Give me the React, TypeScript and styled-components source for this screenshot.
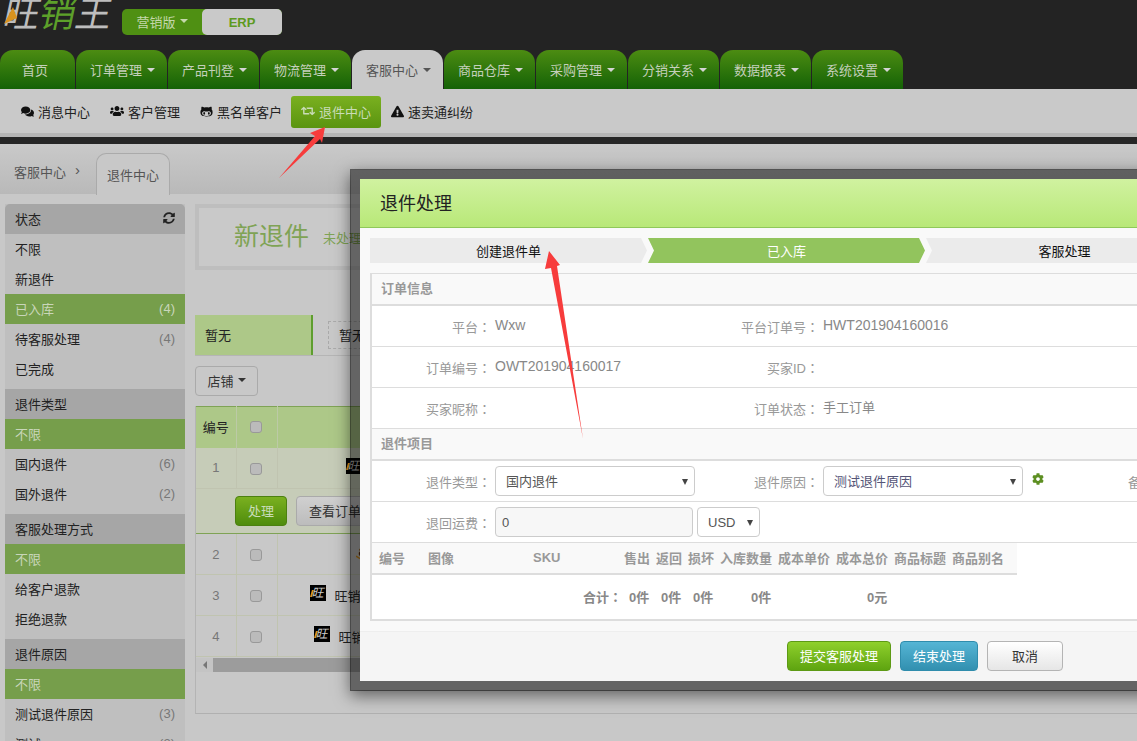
import * as React from 'react'
import styled, { createGlobalStyle } from 'styled-components'
import { FaComments, FaUsers, FaGithubAlt, FaRetweet, FaExclamationTriangle, FaSyncAlt, FaCog } from 'react-icons/fa'

const GlobalStyle = createGlobalStyle`
  html, body { margin: 0; padding: 0; overflow: hidden; background: #c8c8c8; }
  * { box-sizing: border-box; }
  body { font-family: "Liberation Sans", "Noto Sans CJK SC", sans-serif; font-size: 13px; color: #222; }
`

const Page = styled.div`
  position: relative;
  width: 1137px;
  height: 741px;
  overflow: hidden;
  background: #c8c8c8;
`

const TopBar = styled.div`
  height: 50px;
  background: #232323;
  display: flex;
  align-items: center;
  overflow: hidden;
`

const LogoWrap = styled.div`
  position: relative;
  width: 122px;
  height: 50px;
  flex: none;
`

const LogoText = styled.div`
  display: flex;
  margin: -10px 0 0 4px;
  font-size: 36px;
  line-height: 50px;
  transform: skewX(-12deg);
  color: #bdbdbd;
`

const LogoGreen = styled.span`
  color: #5da02a;
`

const LogoMark = styled.svg`
  position: absolute;
  left: 4px;
  top: 6px;
`

const VersionSwitch = styled.div`
  display: flex;
  height: 26px;
  width: 160px;
  margin-top: -6px;
  border-radius: 5px;
  background: #4f9013;
`

const VersionLabel = styled.div`
  width: 80px;
  display: flex;
  align-items: center;
  justify-content: center;
  gap: 4px;
  padding-bottom: 2px;
  color: #c5d8ac;
`

const VersionActive = styled.div`
  width: 80px;
  display: flex;
  align-items: center;
  justify-content: center;
  background: #c9c9c9;
  border-radius: 5px;
  color: #5d9a20;
  font-weight: bold;
`

const Caret = styled.i<{ $color?: string }>`
  display: inline-block;
  width: 0;
  height: 0;
  border-left: 4px solid transparent;
  border-right: 4px solid transparent;
  border-top: 4px solid ${p => p.$color || '#d5d5d5'};
`

const MainTabs = styled.div`
  display: flex;
  gap: 1px;
  height: 39px;
  background: #232323;
`

const MainTab = styled.div<{ $active?: boolean; $plain?: boolean }>`
  width: ${p => (p.$plain ? '75px' : '91px')};
  display: flex;
  align-items: center;
  justify-content: ${p => (p.$plain ? 'center' : 'flex-start')};
  gap: 5px;
  padding: ${p => (p.$plain ? '0 5px 0 0' : '0 0 0 14px')};
  border-radius: 13px 13px 0 0;
  background: ${p => (p.$active ? '#c9c9c9' : 'linear-gradient(#4c8c12, #146206)')};
  color: ${p => (p.$active ? '#555' : '#c5d0bc')};
`

const SubNav = styled.div`
  height: 48px;
  background: #c9c9c9;
  border-bottom: 4px solid #b5b5b5;
  display: flex;
  align-items: flex-start;
  padding: 7px 0 0 11px;
`

const SubItem = styled.div<{ $active?: boolean; $width: number }>`
  width: ${p => p.$width}px;
  height: 32px;
  display: flex;
  align-items: center;
  gap: 4px;
  padding: 0 0 2px 10px;
  white-space: nowrap;
  border-radius: 3px;
  color: ${p => (p.$active ? '#c9dcb8' : '#222')};
  background: ${p => (p.$active ? 'linear-gradient(#7ab020, #5a9410)' : 'transparent')};
  svg { flex: none; color: ${p => (p.$active ? '#c9dcb8' : '#111')}; }
`

const DarkStrip = styled.div`
  height: 7px;
  background: #262626;
`

const Crumbs = styled.div`
  height: 50px;
  display: flex;
  align-items: flex-end;
  padding-left: 14px;
  background: linear-gradient(#c9c9c9, #b9b9b9);
  color: #555;
`

const CrumbText = styled.div`
  height: 42px;
  display: flex;
  align-items: flex-start;
  padding-top: 10px;
  gap: 9px;
  width: 82px;
`

const CrumbSep = styled.span`
  font-size: 15px;
  line-height: 16px;
`

const CrumbTab = styled.div`
  width: 74px;
  height: 42px;
  margin-bottom: -1px;
  display: flex;
  align-items: center;
  justify-content: center;
  background: #c8c8c8;
  border: 1px solid #aaa;
  border-bottom: 0;
  border-radius: 10px 10px 0 0;
`

const Main = styled.div`
  display: flex;
  gap: 10px;
  padding: 10px 0 0 5px;
`

const Sidebar = styled.div`
  width: 180px;
  flex: none;
  background: #bfbfbf;
  display: flex;
  flex-direction: column;
`

const SideGroup = styled.div`
  margin-bottom: 5px;
  &:first-child > div:first-child { border-radius: 5px 5px 0 0; }
`

const SideHead = styled.div`
  height: 30px;
  display: flex;
  align-items: center;
  justify-content: space-between;
  padding: 0 10px 2px;
  background: #a6a6a6;
  color: #222;
`

const SideRow = styled.div<{ $active?: boolean }>`
  height: 30px;
  display: flex;
  align-items: center;
  justify-content: space-between;
  padding: 0 10px 2px;
  background: ${p => (p.$active ? '#769e4b' : 'transparent')};
  color: ${p => (p.$active ? '#c9d6ba' : '#222')};
`

const SideCount = styled.span<{ $active?: boolean }>`
  color: ${p => (p.$active ? '#c9d6ba' : '#777')};
`

const Content = styled.div`
  flex: 1;
  min-width: 0;
`

const Hero = styled.div`
  height: 66px;
  border: 4px solid #bebebe;
  background: #c9c9c9;
  display: flex;
  align-items: center;
  gap: 14px;
  padding-left: 35px;
  color: #7fa355;
`

const HeroTitle = styled.div`
  font-size: 25px;
  padding-bottom: 7px;
`

const FilterBar = styled.div`
  margin-top: 45px;
  height: 41px;
  display: flex;
  border-bottom: 1px solid #b5b5b5;
`

const FilterLabel = styled.div`
  width: 118px;
  display: flex;
  align-items: center;
  padding: 0 0 2px 10px;
  background: #adc888;
  border-right: 2px solid #5e9e2e;
`

const FilterChip = styled.div`
  margin: 6px 0 0 15px;
  height: 28px;
  width: 80px;
  display: flex;
  align-items: center;
  padding: 0 0 2px 10px;
  border: 1px dashed #aaa;
`

const DropButton = styled.div`
  margin-top: 10px;
  width: 63px;
  height: 30px;
  display: flex;
  align-items: center;
  justify-content: center;
  gap: 4px;
  padding-bottom: 2px;
  border: 1px solid #aaa;
  border-radius: 4px;
  color: #333;
`

const TableBox = styled.div`
  margin-top: 10px;
  border-left: 1px solid #b4b4b4;
  border-bottom: 1px solid #b0b0b0;
`

const OrderTable = styled.table`
  width: 100%;
  border-collapse: collapse;
  table-layout: fixed;
`

const HeadCell = styled.th`
  height: 41px;
  padding: 0 0 2px;
  font-weight: normal;
  color: #222;
  background: #adc888;
  border-top: 1px solid #7fa355;
  border-right: 1px solid #bccaa6;
`

const Cell = styled.td<{ $selected?: boolean }>`
  height: 41px;
  padding: 0;
  text-align: center;
  color: #777;
  background: ${p => (p.$selected ? '#c6ccb8' : 'transparent')};
  border-right: 1px solid #c0c4b0;
  border-bottom: 1px solid #c0c4b0;
`

const ActionCell = styled.td`
  height: 45px;
  padding: 0 0 0 39px;
  background: #c6ccb8;
  border-bottom: 1px solid #7fa355;
`

const Check = styled.input`
  appearance: none;
  display: block;
  width: 12px;
  height: 12px;
  margin: 2px 0 0 13px;
  background: #bbb;
  border: 1px solid #999;
  border-radius: 3px;
`

const ShopCell = styled.div<{ $offset: number }>`
  display: flex;
  align-items: center;
  gap: 9px;
  padding-left: ${p => p.$offset}px;
  color: #222;
  white-space: nowrap;
`

const MiniLogo = styled.div`
  position: relative;
  width: 16px;
  height: 16px;
  margin-bottom: 4px;
  flex: none;
  display: flex;
  align-items: center;
  justify-content: center;
  background: #000;
  color: #ccc;
  font-size: 12px;
  line-height: 16px;
  font-style: italic;
  &::before {
    content: '';
    position: absolute;
    left: 1px;
    top: 5px;
    width: 2px;
    height: 7px;
    background: #d9921e;
    transform: skewX(-15deg);
  }
`

const AmazonMark = styled.div`
  position: relative;
  width: 14px;
  height: 16px;
  margin-bottom: 4px;
  font-size: 14px;
  font-weight: bold;
  line-height: 14px;
  color: #222;
  svg { position: absolute; left: 0; top: 11px; }
`

const Btn = styled.button<{ $kind?: 'green' | 'blue' | 'plain'; $width: number }>`
  width: ${p => p.$width}px;
  height: 30px;
  padding: 0 0 2px;
  font: inherit;
  border-radius: 4px;
  border: 1px solid ${p => (p.$kind === 'green' ? '#5d9a15' : p.$kind === 'blue' ? '#2f8cac' : '#b4b4b4')};
  color: ${p => (p.$kind === 'plain' || !p.$kind ? '#333' : '#fff')};
  background: ${p =>
    p.$kind === 'green'
      ? 'linear-gradient(#8fd02c, #5ea410)'
      : p.$kind === 'blue'
        ? 'linear-gradient(#55b5d5, #3290b0)'
        : 'linear-gradient(#fff, #e6e6e6)'};
`

const DimButton = styled.button<{ $kind?: 'green'; $width: number }>`
  width: ${p => p.$width}px;
  height: 30px;
  margin-right: 9px;
  padding: 0 0 2px;
  font: inherit;
  border-radius: 4px;
  border: 1px solid ${p => (p.$kind ? '#4c8010' : '#aaa')};
  color: ${p => (p.$kind ? '#c9dcb8' : '#333')};
  background: ${p => (p.$kind ? 'linear-gradient(#7ab020, #4f8c0c)' : 'linear-gradient(#d0d0d0, #bcbcbc)')};
`

const ScrollBar = styled.div`
  height: 14px;
  margin-top: 1px;
  display: flex;
  background: #c4c4c4;
`

const ScrollArrow = styled.div`
  width: 17px;
  display: flex;
  align-items: center;
  justify-content: center;
  &::before {
    content: '';
    border-top: 4px solid transparent;
    border-bottom: 4px solid transparent;
    border-right: 4px solid #777;
  }
`

const ScrollThumb = styled.div`
  flex: 1;
  background: #9c9c9c;
`

const TableFoot = styled.div`
  height: 41px;
`

const Modal = styled.div`
  position: absolute;
  left: 350px;
  top: 169px;
  width: 1100px;
  border: 10px solid rgba(0, 0, 0, 0.5);
  background: #f9f9f9;
  background-clip: padding-box;
  box-shadow: 0 5px 15px rgba(0, 0, 0, 0.5);
`

const ModalHead = styled.div`
  height: 49px;
  display: flex;
  align-items: center;
  padding: 0 0 2px 20px;
  font-size: 18px;
  color: #222;
  background: linear-gradient(#d0f2a0, #b8e878);
  border-bottom: 1px solid #8fc85a;
`

const ModalBody = styled.div`
  padding: 10px;
`

const Steps = styled.div`
  display: flex;
  height: 25px;
`

const Step = styled.div<{ $active?: boolean; $first?: boolean }>`
  width: 277px;
  margin-left: ${p => (p.$first ? '0' : '1px')};
  display: flex;
  align-items: center;
  justify-content: center;
  padding-bottom: 1px;
  background: ${p => (p.$active ? '#92c45d' : '#ebebeb')};
  color: ${p => (p.$active ? '#fff' : '#111')};
  clip-path: ${p =>
    p.$first
      ? 'polygon(0 0, calc(100% - 6px) 0, 100% 50%, calc(100% - 6px) 100%, 0 100%)'
      : 'polygon(0 0, calc(100% - 6px) 0, 100% 50%, calc(100% - 6px) 100%, 0 100%, 6px 50%)'};
`

const Panel = styled.div`
  margin-top: 10px;
  border: 2px solid #ddd;
  border-width: 1px 0 2px 2px;
  background: #fff;
`

const SectionHead = styled.div`
  height: 32px;
  display: flex;
  align-items: center;
  padding: 0 0 3px 9px;
  font-weight: bold;
  color: #999;
  background: #f9f9f9;
  border-bottom: 2px solid #ddd;
`

const FormRow = styled.div`
  height: 41px;
  display: flex;
  align-items: center;
  border-bottom: 1px solid #ddd;
`

const FieldLabel = styled.div<{ $width: number }>`
  width: ${p => p.$width}px;
  flex: none;
  text-align: right;
  white-space: nowrap;
  margin-right: 4px;
  color: #999;
`

// the traditional-Chinese face centres the full-width colon, as the page does
const Colon = styled.span`
  font-family: "Noto Sans CJK TC", sans-serif;
`

const Value = styled.div<{ $width: number; $latin?: boolean }>`
  width: ${p => p.$width}px;
  flex: none;
  color: #888;
  padding-bottom: 3px;
  font-size: ${p => (p.$latin ? '14px' : '13px')};
`

const SelectBox = styled.div<{ $width: number }>`
  position: relative;
  width: ${p => p.$width}px;
  flex: none;
  &::after {
    content: '';
    position: absolute;
    right: 7px;
    top: 13px;
    border-left: 3.5px solid transparent;
    border-right: 3.5px solid transparent;
    border-top: 6px solid #444;
  }
`

const Select = styled.select<{ $accent?: boolean; $pad: number }>`
  appearance: none;
  display: block;
  width: 100%;
  height: 30px;
  padding: 0 0 0 ${p => p.$pad}px;
  font: inherit;
  color: ${p => (p.$accent ? '#557' : '#555')};
  background: #fff;
  border: 1px solid #ccc;
  border-radius: 4px;
`

const Field = styled.input`
  width: 198px;
  height: 30px;
  padding: 0 6px;
  margin-right: 4px;
  font: inherit;
  color: #555;
  background: #f7f7f7;
  border: 1px solid #ccc;
  border-radius: 4px;
  flex: none;
`

const GearSlot = styled.div`
  width: 90px;
  flex: none;
  padding: 0 0 4px 9px;
  color: #5d8f22;
  display: flex;
`

const itemGrid = '49px 105px 91px 32px 32px 32px 58px 58px 58px 58px 72px'

const ItemHead = styled.div`
  width: 645px;
  height: 32px;
  display: grid;
  grid-template-columns: ${itemGrid};
  align-items: center;
  padding-bottom: 2px;
  font-weight: bold;
  color: #999;
  background: #f9f9f9;
  border-bottom: 2px solid #ddd;
`

const ItemCell = styled.div<{ $pad?: number }>`
  padding-left: ${p => p.$pad ?? 7}px;
  white-space: nowrap;
`

const TotalRow = styled.div`
  width: 645px;
  height: 44px;
  display: grid;
  grid-template-columns: ${itemGrid};
  align-items: center;
  padding-bottom: 2px;
  font-weight: bold;
  color: #888;
`

const TotalLabel = styled.div`
  grid-column: 1 / 4;
  text-align: right;
  margin-right: -5px;
`

const ModalFoot = styled.div`
  height: 50px;
  display: flex;
  align-items: center;
  gap: 9px;
  padding-left: 427px;
  background: #f5f5f5;
  box-shadow: inset 0 1px 1px #eee;
`

const ArrowLayer = styled.svg`
  position: absolute;
  left: 0;
  top: 0;
  pointer-events: none;
`

const tabs = ['订单管理', '产品刊登', '物流管理', '客服中心', '商品仓库', '采购管理', '分销关系', '数据报表', '系统设置']

const sideGroups = [
  { title: '状态', refresh: true, rows: [['不限'], ['新退件'], ['已入库', '(4)', true], ['待客服处理', '(4)'], ['已完成']] },
  { title: '退件类型', rows: [['不限', '', true], ['国内退件', '(6)'], ['国外退件', '(2)']] },
  { title: '客服处理方式', rows: [['不限', '', true], ['给客户退款'], ['拒绝退款']] },
  { title: '退件原因', rows: [['不限', '', true], ['测试退件原因', '(3)'], ['测试', '(2)']] },
] as { title: string; refresh?: boolean; rows: [string, string?, boolean?][] }[]

const Logo = () =>
  <LogoWrap>
    <LogoText>旺<LogoGreen>销</LogoGreen>王</LogoText>
    <LogoMark width="14" height="20" viewBox="0 0 14 20">
      <polygon points="9,1 0,18 13,12" fill="#d9921e" />
    </LogoMark>
  </LogoWrap>

const Label = ({ width, text }: { width: number, text: string }) =>
  <FieldLabel $width={width}>{text}<Colon>：</Colon></FieldLabel>

const ShopRow = ({ num, children }: React.PropsWithChildren<{ num: number }>) =>
  <tr>
    <Cell $selected={num === 1}>{num}</Cell>
    <Cell $selected={num === 1}><Check type="checkbox" /></Cell>
    <Cell $selected={num === 1}>{children}</Cell>
  </tr>

const InfoRow = ({ a, b, c, d, latin }: { a: string, b: string, c: string, d: string, latin?: boolean }) =>
  <FormRow>
    <Label width={119} text={a} />
    <Value $width={214} $latin>{b}</Value>
    <Label width={110} text={c} />
    <Value $width={300} $latin={latin}>{d}</Value>
  </FormRow>

export default function App() {
  return <Page>
    <GlobalStyle />
    <TopBar>
      <Logo />
      <VersionSwitch>
        <VersionLabel>营销版 <Caret $color="#c5d8ac" /></VersionLabel>
        <VersionActive>ERP</VersionActive>
      </VersionSwitch>
    </TopBar>
    <MainTabs>
      <MainTab $plain>首页</MainTab>
      {tabs.map(t =>
        <MainTab key={t} $active={t === '客服中心'}>
          {t}<Caret $color={t === '客服中心' ? '#555' : '#d5d5d5'} />
        </MainTab>)}
    </MainTabs>
    <SubNav>
      <SubItem $width={89}><FaComments size={13} />消息中心</SubItem>
      <SubItem $width={90}><FaUsers size={14} />客户管理</SubItem>
      <SubItem $width={101}><FaGithubAlt size={13} />黑名单客户</SubItem>
      <SubItem $width={90} $active><FaRetweet size={14} />退件中心</SubItem>
      <SubItem $width={100}><FaExclamationTriangle size={13} />速卖通纠纷</SubItem>
    </SubNav>
    <DarkStrip />
    <Crumbs>
      <CrumbText>客服中心<CrumbSep>›</CrumbSep></CrumbText>
      <CrumbTab>退件中心</CrumbTab>
    </Crumbs>
    <Main>
      <Sidebar>
        {sideGroups.map(g =>
          <SideGroup key={g.title}>
            <SideHead>{g.title}{g.refresh && <FaSyncAlt size={12} color="#222" />}</SideHead>
            {g.rows.map(([label, count, active]) =>
              <SideRow key={label} $active={active}>
                {label}
                {count && <SideCount $active={active}>{count}</SideCount>}
              </SideRow>)}
          </SideGroup>)}
      </Sidebar>
      <Content>
        <Hero>
          <HeroTitle>新退件</HeroTitle>
          <span>未处理</span>
        </Hero>
        <FilterBar>
          <FilterLabel>暂无</FilterLabel>
          <FilterChip>暂无</FilterChip>
        </FilterBar>
        <DropButton>店铺 <Caret $color="#333" /></DropButton>
        <TableBox>
          <OrderTable>
            <colgroup>
              <col width={40} />
              <col width={41} />
              <col />
            </colgroup>
            <thead>
              <tr>
                <HeadCell>编号</HeadCell>
                <HeadCell><Check type="checkbox" /></HeadCell>
                <HeadCell />
              </tr>
            </thead>
            <tbody>
              <ShopRow num={1}>
                <ShopCell $offset={68}><MiniLogo>旺</MiniLogo>旺销王</ShopCell>
              </ShopRow>
              <tr>
                <ActionCell colSpan={3}>
                  <DimButton $kind="green" $width={52}>处理</DimButton>
                  <DimButton $width={78}>查看订单</DimButton>
                </ActionCell>
              </tr>
              <ShopRow num={2}>
                <ShopCell $offset={78}>
                  <AmazonMark>
                    a
                    <svg width="14" height="6" viewBox="0 0 14 6">
                      <path d="M0 1 Q6 6 12 2" fill="none" stroke="#d9921e" strokeWidth="1.4" />
                    </svg>
                  </AmazonMark>
                </ShopCell>
              </ShopRow>
              <ShopRow num={3}>
                <ShopCell $offset={32}><MiniLogo>旺</MiniLogo>旺销王</ShopCell>
              </ShopRow>
              <ShopRow num={4}>
                <ShopCell $offset={36}><MiniLogo>旺</MiniLogo>旺销王</ShopCell>
              </ShopRow>
            </tbody>
          </OrderTable>
          <ScrollBar>
            <ScrollArrow />
            <ScrollThumb />
          </ScrollBar>
          <TableFoot />
        </TableBox>
      </Content>
    </Main>

    <Modal>
      <ModalHead>退件处理</ModalHead>
      <ModalBody>
        <Steps>
          <Step $first>创建退件单</Step>
          <Step $active>已入库</Step>
          <Step>客服处理</Step>
        </Steps>
        <Panel>
          <SectionHead>订单信息</SectionHead>
          <InfoRow a="平台" b="Wxw" c="平台订单号" d="HWT201904160016" latin />
          <InfoRow a="订单编号" b="OWT201904160017" c="买家ID" d="" />
          <InfoRow a="买家昵称" b="" c="订单状态" d="手工订单" />
          <SectionHead>退件项目</SectionHead>
          <FormRow>
            <Label width={119} text="退件类型" />
            <SelectBox $width={200}>
              <Select $pad={10} defaultValue="国内退件">
                <option>国内退件</option>
              </Select>
            </SelectBox>
            <Label width={124} text="退件原因" />
            <SelectBox $width={200}>
              <Select $pad={10} $accent defaultValue="测试退件原因">
                <option>测试退件原因</option>
              </Select>
            </SelectBox>
            <GearSlot><FaCog size={12} /></GearSlot>
            <Label width={54} text="备注" />
          </FormRow>
          <FormRow>
            <Label width={119} text="退回运费" />
            <Field defaultValue="0" />
            <SelectBox $width={63}>
              <Select $pad={10} defaultValue="USD">
                <option>USD</option>
              </Select>
            </SelectBox>
          </FormRow>
          <ItemHead>
            {['编号', '图像', 'SKU', '售出', '返回', '损坏', '入库数量', '成本单价', '成本总价', '商品标题', '商品别名'].map(h =>
              <ItemCell key={h}>{h}</ItemCell>)}
          </ItemHead>
          <TotalRow>
            <TotalLabel>合计<Colon>：</Colon></TotalLabel>
            <ItemCell $pad={12}>0件</ItemCell>
            <ItemCell $pad={12}>0件</ItemCell>
            <ItemCell $pad={12}>0件</ItemCell>
            <ItemCell $pad={38}>0件</ItemCell>
            <span />
            <ItemCell $pad={38}>0元</ItemCell>
          </TotalRow>
        </Panel>
      </ModalBody>
      <ModalFoot>
        <Btn $kind="green" $width={104}>提交客服处理</Btn>
        <Btn $kind="blue" $width={78}>结束处理</Btn>
        <Btn $kind="plain" $width={76}>取消</Btn>
      </ModalFoot>
    </Modal>

    <ArrowLayer width="1137" height="741" viewBox="0 0 1137 741">
      <polygon points="325,127 310,133 315,136 279,178 320,139 322,143" fill="#f73c3c" />
      <polygon points="549,251 545,269 551,268 583,439 557,266 560,265" fill="#f73c3c" />
    </ArrowLayer>
  </Page>
}
